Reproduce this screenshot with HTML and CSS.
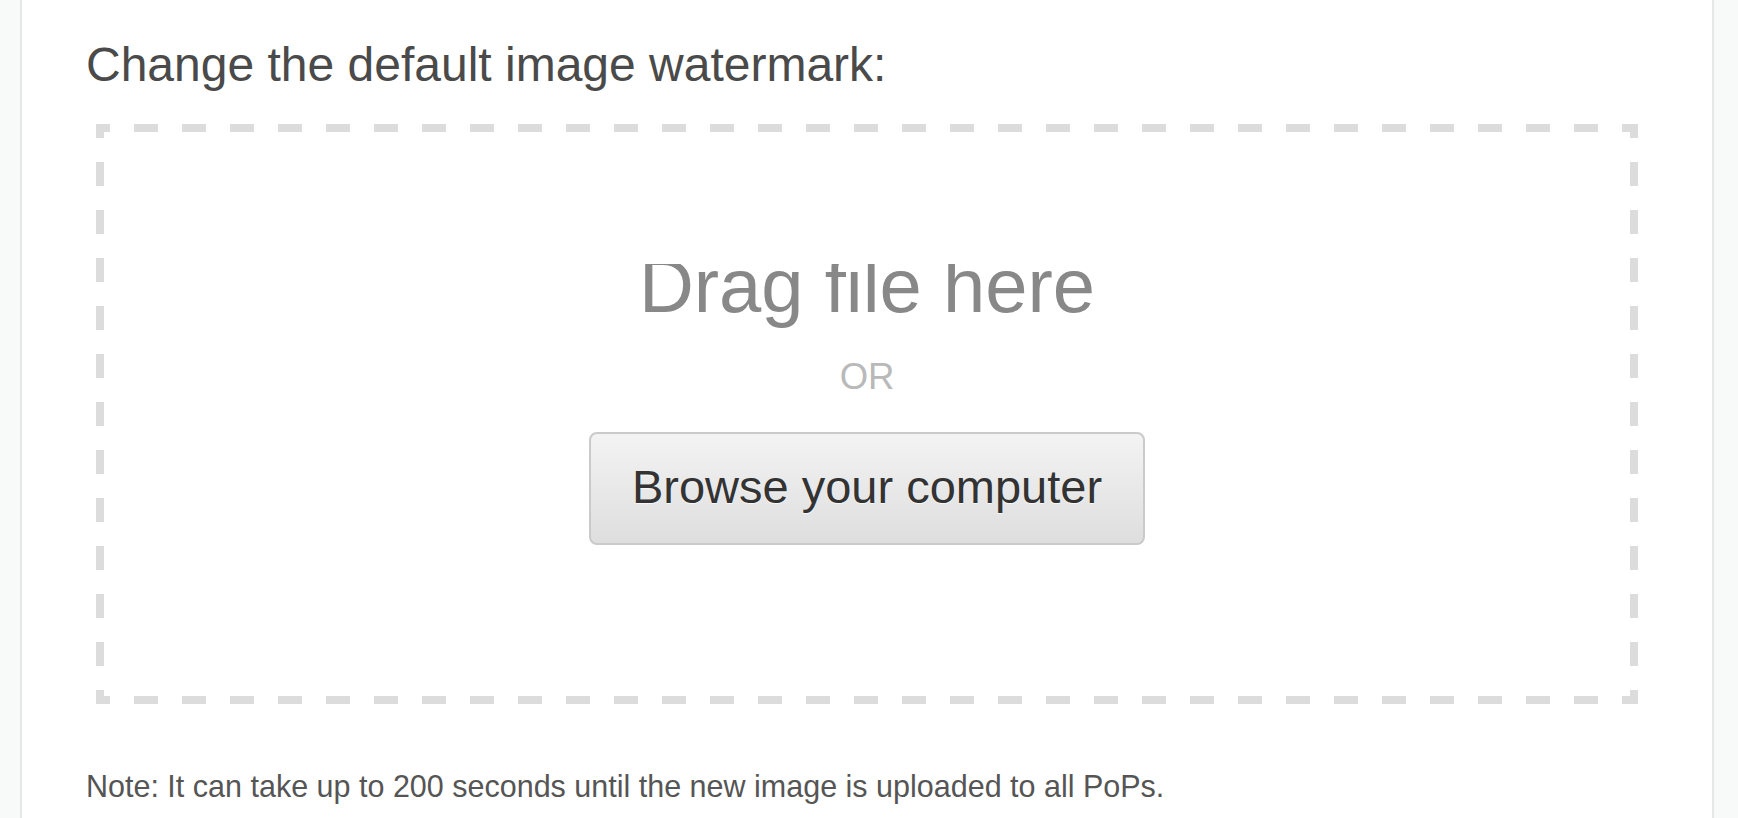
FILE: index.html
```html
<!DOCTYPE html>
<html lang="en">
<head>
<meta charset="utf-8">
<title>Change watermark</title>
<link rel="stylesheet" href="styles.css">
</head>
<body>
<div class="layout">
  <aside class="side side-left"></aside>
  <main class="main">
    <h2 class="title">Change the default image watermark:</h2>
    <div class="dropzone">
      <div class="drag-text">Drag file here</div>
      <div class="or-text">OR</div>
      <button class="browse-btn" type="button">Browse your computer</button>
    </div>
    <p class="note">Note: It can take up to 200 seconds until the new image is uploaded to all PoPs.</p>
  </main>
  <aside class="side side-right"></aside>
</div>
</body>
</html>
```
FILE: styles.css
```css
html, body {
  margin: 0;
  padding: 0;
  height: 100%;
  overflow: hidden;
  background: #ffffff;
  font-family: "Liberation Sans", Arial, Helvetica, sans-serif;
}

.layout {
  display: flex;
  height: 100%;
}

.side {
  background: #f8f9f9;
  flex: none;
}

.side-left {
  width: 20px;
  border-right: 2px solid #e6e7e7;
}

.side-right {
  width: 24px;
  border-left: 2px solid #e6e7e7;
}

.main {
  flex: 1;
  background: #ffffff;
  padding: 37px 64px 0 64px;
}

.title {
  margin: 0;
  font-size: 48px;
  line-height: 56px;
  font-weight: normal;
  color: #4a4a4a;
}

.dropzone {
  margin: 31px 10px 0 10px;
  height: 580px;
  box-sizing: border-box;
  padding: 140px 0 0 0;
  display: flex;
  flex-direction: column;
  align-items: center;
  background-image:
    linear-gradient(to right, #dcdcdc 24px, transparent 24px),
    linear-gradient(to right, #dcdcdc 24px, transparent 24px),
    linear-gradient(to bottom, #dcdcdc 24px, transparent 24px),
    linear-gradient(to bottom, #dcdcdc 24px, transparent 24px);
  background-size: 48px 8px, 48px 8px, 8px 48px, 8px 48px;
  background-repeat: repeat-x, repeat-x, repeat-y, repeat-y;
  background-position: -10px 0, -10px 100%, 0 -10px, 100% -10px;
}

.drag-text {
  font-size: 76px;
  line-height: 44px;
  height: 44px;
  padding-bottom: 22px;
  overflow: hidden;
  color: #888888;
  white-space: nowrap;
}

.or-text {
  margin-top: 27px;
  font-size: 36.5px;
  line-height: 40px;
  color: #b9b9b9;
}

.browse-btn {
  margin-top: 35px;
  font-family: "Liberation Sans", Arial, Helvetica, sans-serif;
  font-size: 47px;
  line-height: 52px;
  padding: 27px 41px 30px 41px;
  color: #333333;
  text-shadow: 0 1px 1px rgba(255, 255, 255, 0.8);
  border: 2px solid #cacaca;
  border-radius: 8px;
  background: linear-gradient(to bottom, #f3f3f3 0%, #dedede 100%);
  cursor: pointer;
}

.note {
  margin: 64px 0 0 0;
  font-size: 30.5px;
  line-height: 36px;
  color: #555555;
}
```
